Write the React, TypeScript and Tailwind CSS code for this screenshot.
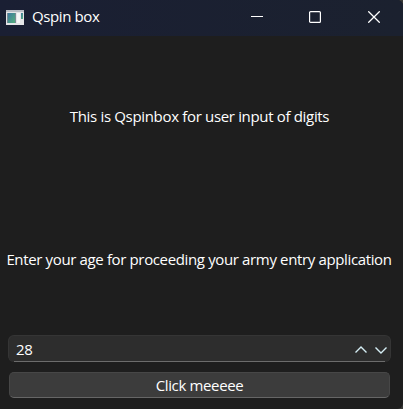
import React from "react";

function AppIcon() {
  return (
    <svg width="18" height="15" viewBox="0 0 18 15" className="shrink-0">
      <defs>
        <linearGradient id="pane" x1="0" y1="0" x2="1" y2="1">
          <stop offset="0" stopColor="#3f79a0" />
          <stop offset="1" stopColor="#55b07c" />
        </linearGradient>
      </defs>
      <rect width="18" height="15" fill="#e4e5e7" />
      <rect width="18" height="2" fill="#b9bdc4" />
      <rect x="1" y="3" width="9" height="10" fill="#7b8b95" />
      <rect x="2" y="3" width="7" height="10" fill="url(#pane)" />
      <rect x="11" y="3" width="3" height="10" fill="#f7f7f7" />
      <rect x="15" y="3" width="2" height="6" fill="url(#pane)" />
    </svg>
  );
}

function TitleBar() {
  return (
    <header className="flex h-9 items-start bg-[#1a2032] bg-linear-to-r from-[#1a1f33] to-[#1b212f] pl-1.5">
      <div className="flex h-[34px] flex-1 items-center gap-2">
        <AppIcon />
        <span className="whitespace-nowrap pb-px tracking-[-0.4px]">Qspin box</span>
      </div>
      <button aria-label="Minimize" className="flex h-[34px] w-[58px] items-center justify-center">
        <svg width="12" height="12" viewBox="0 0 12 12">
          <path d="M0 5.5H12" stroke="#fff" />
        </svg>
      </button>
      <button aria-label="Maximize" className="flex h-[34px] w-[58px] items-center justify-center">
        <svg width="12" height="12" viewBox="0 0 12 12">
          <rect x="0.6" y="0.6" width="10.8" height="10.8" rx="1" fill="none" stroke="#fff" strokeWidth="1.2" />
        </svg>
      </button>
      <button aria-label="Close" className="flex h-[34px] w-[59px] items-center justify-center">
        <svg width="12" height="12" viewBox="0 0 12 12">
          <path d="M0.3 0.3L11.7 11.7M11.7 0.3L0.3 11.7" stroke="#fff" strokeWidth="1.25" />
        </svg>
      </button>
    </header>
  );
}

export default function App() {
  return (
    <div className="bg-[#3a3a38]">
      <div className="flex h-[409px] w-[403px] flex-col overflow-hidden rounded-r-[6px] bg-[#1e1e1e] font-['Open_Sans',sans-serif] text-[15px] text-white">
        <TitleBar />
        <main className="flex flex-1 flex-col">
          <p className="mt-[69px] h-[22px] whitespace-nowrap pr-1 text-center leading-[22px] tracking-[-0.33px]">
            This is Qspinbox for user input of digits
          </p>
          <p className="mt-[121px] h-[22px] whitespace-nowrap pr-[5px] text-center leading-[22px] tracking-[-0.36px]">
            Enter your age for proceeding your army entry application
          </p>
          <div className="ml-2 mt-[65px] flex h-[27px] w-[383px] flex-col rounded-[6px] border border-b-0 border-[#353535] bg-[#2d2d2d]">
            <div className="flex flex-1 items-center pl-[7px] pr-[3px]">
              <span className="flex-1 pt-px leading-5 tracking-[-0.4px]">28</span>
              <svg width="32" height="8" viewBox="0 0 32 8" fill="none" stroke="#d5eef5" strokeWidth="1.4" className="mt-0.5">
                <path d="M0.5 6.5L6 1L11.5 6.5M20.5 1.5L26 7L31.5 1.5" />
              </svg>
            </div>
            <div className="mx-[5px] h-px shrink-0 bg-[#6c6c6c]" />
          </div>
          <button className="ml-[9px] mt-2.5 flex h-[26px] w-[381px] items-center justify-center rounded-[5px] border border-[#474747] border-b-[#666] bg-[#3c3c3c] pt-px tracking-[-0.36px]">
            Click meeeee
          </button>
        </main>
      </div>
    </div>
  );
}
